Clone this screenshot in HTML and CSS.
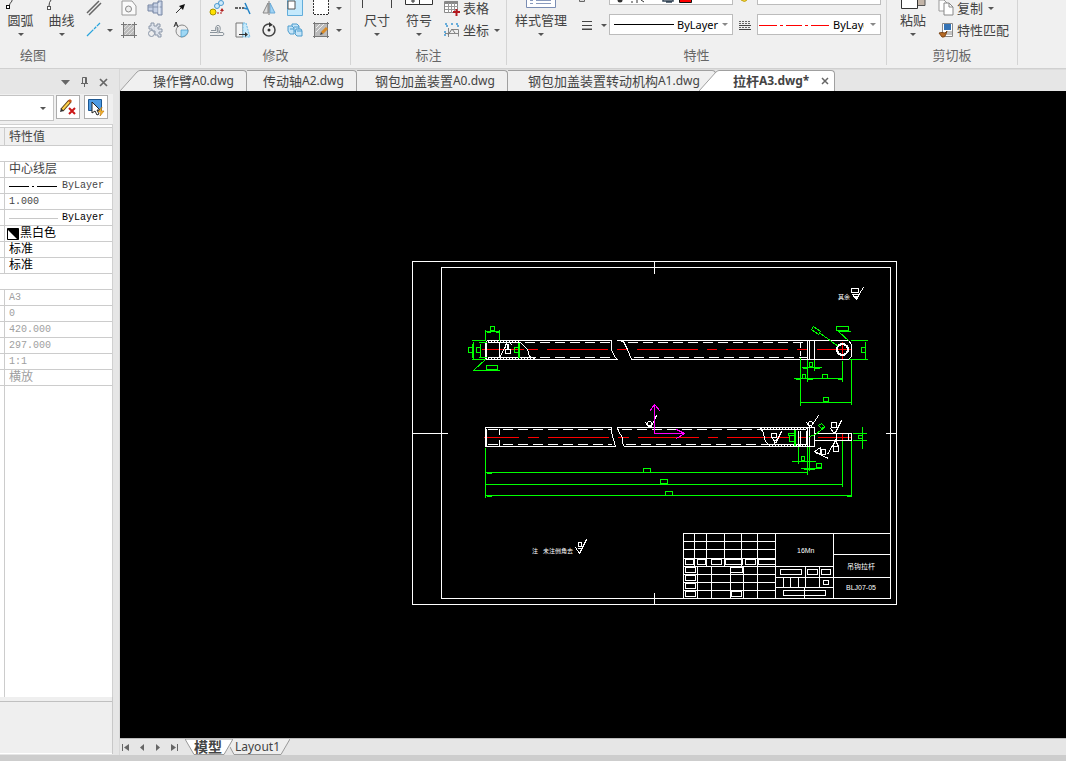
FILE: index.html
```html
<!DOCTYPE html>
<html lang="zh-CN">
<head>
<meta charset="utf-8">
<title>拉杆A3.dwg</title>
<link rel="stylesheet" href="styles.css">
</head>
<body>
<header class="ribbon">
  <section class="group group-draw">
    <div class="tools">
      <button class="big"><svg class="big-icon" width="40" height="11"><path d="M11 0v1q-2 2-3 5" fill="none" stroke="#444"/><rect x="5.500" y="5.500" width="3" height="3" fill="#fff" stroke="#111"/></svg>圆弧<i class="caret"></i></button>
      <button class="big"><svg class="big-icon" width="40" height="11"><path d="M9 0q-2 2-2 6" fill="none" stroke="#444"/><rect x="5.500" y="6.500" width="3" height="3" fill="#fff" stroke="#555"/></svg>曲线<i class="caret"></i></button>
      <div class="pair">
        <button class="tool" aria-label="多线"><svg width="16" height="16"><path d="M1 13 13 1M3 15 15 3" stroke="#666" stroke-width="1.500"/></svg></button>
        <button class="tool" aria-label="构造线"><svg width="16" height="16"><path d="M1 14 14 1" stroke="#28a4dc" stroke-width="1.300" stroke-dasharray="9 1 3 1"/></svg><i class="caret"></i></button>
      </div>
      <div class="pair">
        <button class="tool" aria-label="区域"><svg width="16" height="16"><path d="M1 1h10l4 5v9H1z" fill="#fafafa" stroke="#999"/><circle cx="7.500" cy="9" r="3" fill="#eee" stroke="#888"/></svg></button>
        <button class="tool" aria-label="填充"><svg width="16" height="16"><path d="M2 2h12v12H2z" fill="#bbb"/><path d="M0 2.500h16M2.500 0v16M13.500 0v16M0 13.500h16" stroke="#777"/><path d="M3 6l4-4M3 10l8-8M4 13l9-9M8 13l5-5" stroke="#eee" stroke-width=".7"/></svg></button>
      </div>
      <div class="pair">
        <button class="tool" aria-label="轴"><svg width="16" height="16"><path d="M1 5h5V3h5V1h4v14h-4v-2H6v-2H1z" fill="#c5d0e4" stroke="#7786a3"/><path d="M1 7h14M6 4v8M11 2v12" stroke="#8795af"/><path d="M12 3v11" stroke="#fff"/></svg></button>
        <button class="tool" aria-label="零件"><svg width="16" height="16"><path d="M4 4V1h3v3h3V2h3v3h-2v2h4v3h-3v2h2v3h-3v-2H8V9H5V7H2V4z" fill="#dfe4ec" stroke="#8a96a8"/><circle cx="4.500" cy="11.500" r="3" fill="#eee" stroke="#8a96a8"/></svg></button>
      </div>
      <div class="pair">
        <button class="tool" aria-label="箭头"><svg width="16" height="16"><path d="M3 13 9 7" stroke="#333"/><path d="M12 4 10 10 6 6z" fill="#111"/></svg></button>
        <button class="tool" aria-label="局部放大"><svg width="16" height="16"><circle cx="9" cy="9" r="6" fill="#eee" stroke="#888"/><path d="M8 8h7q0 6-7 7z" fill="#9fd8f5" stroke="#4a9cc9" stroke-width=".7"/><path d="M1 5 3 0l2 5M2 3h2" fill="none" stroke="#333"/></svg></button>
      </div>
    </div>
    <h2 class="group-name">绘图</h2>
  </section>
  <section class="group group-modify">
    <div class="tools">
      <div class="pair">
        <button class="tool" aria-label="复制对象"><svg width="16" height="16"><circle cx="4" cy="12" r="3" fill="#ffe100" stroke="#a59300"/><g fill="#cfeafa" stroke="#4a9ad0"><circle cx="8" cy="6" r="2.500"/><circle cx="12" cy="3" r="2.500"/></g><path d="M8 13h5v-2" fill="none" stroke="#b21f1f" stroke-dasharray="2 1"/><path d="m11 11 2-3 2 3z" fill="#b21f1f"/></svg></button>
        <button class="tool" aria-label="偏移"><svg width="16" height="16"><path d="M1 13.500h13q2-1.500 0-3h-4q2-3 1-6Q9 2 7 4.500q-1 3 0 4H2" fill="none" stroke="#8b949c"/><path d="M1 10.500h7q1-1 0-5h1v6" fill="none" stroke="#8b949c"/></svg></button>
      </div>
      <div class="pair">
        <button class="tool" aria-label="修剪"><svg width="16" height="16"><path d="M0 8h3m1 0h2m1 0h2" stroke="#333" stroke-width="1.500"/><path d="m9 8 3 1M10 3l5 11" stroke="#2584c6" stroke-width="1.500"/></svg></button>
        <button class="tool" aria-label="拉伸"><svg width="16" height="16"><path d="M1 1h7v14H1z" fill="#f5f5f5" stroke="#777"/><path d="M8 1h3l4 14H8z" fill="#c6eafc" stroke="#69b8e4" stroke-dasharray="2 1"/><path d="M4 12.500h6" stroke="#333"/><path d="m10 10 3 2.500-3 2.500z" fill="#333"/></svg></button>
      </div>
      <div class="pair">
        <button class="tool" aria-label="镜像"><svg width="16" height="16"><path d="M7 3v10H2z" fill="#ddd" stroke="#888"/><path d="M9 3v10h5z" fill="#9fd3f5" stroke="#68a8d5"/><path d="M8 1v14" stroke="#777"/></svg></button>
        <button class="tool" aria-label="旋转"><svg width="16" height="16"><circle cx="8" cy="8" r="6" fill="none" stroke="#444" stroke-width="1.500" stroke-dasharray="29 3"/><circle cx="8" cy="8" r="1.500" fill="#333"/><path d="m8 0 4 3-4 2z" fill="#333"/></svg></button>
      </div>
      <div class="pair">
        <button class="tool" aria-label="缩放"><svg width="16" height="16"><path d="M.5 0v15.500h15V0" fill="#c4e9fc" stroke="#62addb"/><path d="M1 1h7v8H1z" fill="#fff" stroke="#555"/></svg></button>
        <button class="tool" aria-label="分解"><svg width="16" height="16"><g fill="#c4e4f8" stroke="#4c9ccd"><path d="M5 2h5l2 2v5H7L5 7z"/><path d="M1 4h4l2 2v6H3L1 9z"/><path d="M9 7h5l1 2v5h-5l-2-2z"/><path d="M3 7h4M10 9h5M7 5h5" fill="none"/></g></svg></button>
      </div>
      <div class="pair">
        <button class="tool" aria-label="选择"><svg width="16" height="16"><path d="M.5 0v14.500h15V0" fill="#fff" stroke="#333" stroke-dasharray="2 1"/></svg><i class="caret"></i></button>
        <button class="tool" aria-label="编辑填充"><svg width="16" height="16"><path d="M2 2h12v12H2z" fill="#bbb"/><path d="M0 1.500h16M1.500 0v16M14.500 0v16M0 14.500h16" stroke="#777"/><path d="M3 6l4-4M3 10l8-8" stroke="#eee"/><path d="m9 11 5-5" stroke="#d98b27" stroke-width="3"/><path d="m7 13 1-3 2 2z" fill="#444"/></svg><i class="caret"></i></button>
      </div>
    </div>
    <h2 class="group-name">修改</h2>
  </section>
  <section class="group group-annotate">
    <div class="tools">
      <button class="big"><svg class="big-icon" width="40" height="11"><path d="M5.500 0v8M34.500 0v8" fill="none" stroke="#444"/></svg>尺寸<i class="caret"></i></button>
      <button class="big"><svg class="big-icon" width="40" height="11"><path d="M6.500-1h27v5.500h-27zM20.500 0v4" fill="#fff" stroke="#333"/><path d="M12 1h4M14 0v3" stroke="#333"/></svg>符号<i class="caret"></i></button>
      <div class="pair">
        <button class="tool labeled"><svg width="16" height="16"><path d="M.5 1.500h13v11H.5z" fill="#fff" stroke="#888"/><path d="M1 1h13v3H1z" fill="#888"/><path d="M1 6.500h13M1 9.500h13M4.500 3v10M7.500 3v10M10.500 3v10" stroke="#999"/><path d="M9 12h7M12.500 9v7" stroke="#b3191f" stroke-width="2"/></svg>表格</button>
        <button class="tool labeled"><svg width="16" height="16"><path d="M4.500 6v9M1 11.500h14M8 7.500h6.500v7" fill="none" stroke="#888"/><path d="m4 13 4-6 3 4" fill="none" stroke="#777"/><path d="M1 2h2v3m4-3h2m3 0h2v3M1 9v5" fill="none" stroke="#3b97d3" stroke-width="1.500" stroke-dasharray="2 1"/></svg>坐标<i class="caret"></i></button>
      </div>
    </div>
    <h2 class="group-name">标注</h2>
  </section>
  <section class="group group-props">
    <div class="tools">
      <button class="big"><svg class="big-icon" width="40" height="11"><path d="M5.500-1h29v8.500h-29z" fill="#fff" stroke="#7a8db3"/><path d="M9 .5h3m3 0h15M9 3.500h3m3 0h15" stroke="#8a9bbd"/></svg>样式管理<i class="caret"></i></button>
      <div class="pair weight">
        <button class="tool" aria-label="图层"><svg width="16" height="16"><path d="M.5 0v1.500h5V0" fill="#ddd" stroke="#666"/></svg></button>
        <button class="tool" aria-label="线宽"><svg width="16" height="16"><path d="M3 4.500h10M3 8.500h10M3 12h10M3 12.500h10" stroke="#444"/></svg><i class="caret"></i></button>
      </div>
      <div class="combos">
        <div class="combo top"><svg width="114" height="5"><circle cx="6" cy="0" r="2.500" fill="#333"/><path d="M17 2h2M23 0v3M27 0l3 2" stroke="#333"/><path d="M49 0v1h10V0M52 2h6" fill="none" stroke="#345" stroke-width="1.500"/><path d="M65.500-1v3.500h12V-1z" fill="#f00" stroke="#111"/></svg></div>
        <div class="combo"><svg width="60" height="19"><path d="M0 9.500h60" stroke="#000"/></svg><select aria-label="线宽"><option>ByLayer</option></select><i class="caret"></i></div>
      </div>
      <div class="pair linetype">
        <span class="tool"><svg width="16" height="16"><path d="M4 0q4 3 6 0" fill="#f7d32b" stroke="#bfa21f"/></svg></span>
        <span class="tool"><svg width="16" height="16"><path d="M2 4.500h12M2 6.500h12M2 10.500h12" stroke="#666" stroke-dasharray="2 1"/><path d="M2 8.500h12M2 12.500h12" stroke="#444"/></svg></span>
      </div>
      <div class="combos">
        <div class="combo top"></div>
        <div class="combo"><svg width="71" height="19"><path d="M0 10.500h18m3 0h3m3 0h16m3 0h3m3 0h18" stroke="#f00"/></svg><select class="clipped" aria-label="线型"><option>ByLayer</option></select><i class="caret"></i></div>
      </div>
    </div>
    <h2 class="group-name">特性</h2>
  </section>
  <section class="group group-clip">
    <div class="tools">
      <button class="big"><svg class="big-icon" width="40" height="11"><path d="M21-1h11v6.500H21z" fill="#c3b5a8" stroke="#555"/><path d="M8.500-1h16v9.500h-16z" fill="#fff" stroke="#333"/></svg>粘贴<i class="caret"></i></button>
      <div class="pair">
        <button class="tool labeled"><svg width="16" height="16"><path d="M1 0h5l3 3v8H1z" fill="#fff" stroke="#999"/><path d="M6 3h5l4 4v8H6z" fill="#fff" stroke="#888"/><path d="M11 3v4h4" fill="none" stroke="#888"/></svg>复制<i class="caret"></i></button>
        <button class="tool labeled"><svg width="16" height="16"><path d="M4.500 1.500h10v13h-10z" fill="#fff" stroke="#888"/><path d="M6 2h7v6H6z" fill="#3473b5"/><path d="M8 10h6M8 12h6" stroke="#888"/><path d="M1 11q3-1 6 0l2-2-1 3q-1 4-4 3z" fill="#b76a24" stroke="#7c4618"/></svg>特性匹配</button>
      </div>
    </div>
    <h2 class="group-name">剪切板</h2>
  </section>
</header>

<main class="work">
  <aside class="panel">
    <div class="panel-title">
      <button aria-label="菜单"><svg width="9" height="10"><path d="M0 3h9L4.500 8z" fill="#666"/></svg></button>
      <button aria-label="固定"><svg width="9" height="10"><path d="M2.500 6V.5h4V6M1 6.500h7M4.500 6v4M5.500 1v5" fill="none" stroke="#666"/></svg></button>
      <button aria-label="关闭"><svg width="9" height="10"><path d="m1 2 7 7M8 2 1 9" stroke="#666" stroke-width="1.700"/></svg></button>
    </div>
    <div class="panel-tools">
      <button class="object-pick" aria-label="选择对象"><i class="caret"></i></button>
      <button class="square" aria-label="取消选择"><svg width="18" height="18"><path d="m3 12 8-9" stroke="#553a14" stroke-width="4"/><path d="m3 12 8-9" stroke="#ffd24a" stroke-width="2"/><path d="m10 4 2-2" stroke="#c8571b" stroke-width="3"/><path d="m1 14 1-4 3 3z" fill="#333"/><path d="m10 10 6 6m0-6-6 6" stroke="#cb1717" stroke-width="2"/></svg></button>
      <button class="square" aria-label="快速选择"><svg width="18" height="18"><path d="M1.500 1.500h13v11h-13z" fill="#4d9be3" stroke="#1c5791"/><path d="M5 4v11l3-2 2 4 2-1-2-4h3z" fill="#fff" stroke="#222"/><path d="m15 9-4 5h3l-1 4 4-5h-3z" fill="#ffc02e" stroke="#c17b10" stroke-width=".7"/></svg></button>
    </div>
    <div class="grid-box">
      <table class="props">
        <thead><tr><th class="stub"></th><th>特性值</th></tr></thead>
        <tbody>
          <tr class="band"><td colspan="2"></td></tr>
          <tr><td class="stub"></td><td class="cjk">中心线层</td></tr>
          <tr><td class="stub"></td><td><span class="line-value"><svg width="49" height="12"><path d="M0 6.500h20m3 0h2m3 0h20" stroke="#000"/></svg>ByLayer</span></td></tr>
          <tr><td class="stub"></td><td>1.000</td></tr>
          <tr class="strong"><td class="stub"></td><td><span class="line-value"><svg width="49" height="12"><path d="M0 6.500h49" stroke="#c8c8c8"/></svg>ByLayer</span></td></tr>
          <tr class="strong"><td class="stub"></td><td class="cjk swatch"><span class="line-value"><svg width="12" height="12"><path d="M.5.500h11v11H.5z" fill="#000" stroke="#000"/><path d="M1 2v9h9z" fill="#fff"/></svg>黑白色</span></td></tr>
          <tr class="strong"><td class="stub"></td><td class="cjk">标准</td></tr>
          <tr class="strong"><td class="stub"></td><td class="cjk">标准</td></tr>
          <tr class="band"><td colspan="2"></td></tr>
          <tr class="off"><td class="stub"></td><td>A3</td></tr>
          <tr class="off"><td class="stub"></td><td>0</td></tr>
          <tr class="off"><td class="stub"></td><td>420.000</td></tr>
          <tr class="off"><td class="stub"></td><td>297.000</td></tr>
          <tr class="off"><td class="stub"></td><td>1:1</td></tr>
          <tr class="off"><td class="stub"></td><td class="cjk">横放</td></tr>
        </tbody>
      </table>
      <div class="rest"></div>
    </div>
    <div class="hint"></div>
  </aside>

  <section class="doc">
    <nav class="tabs">
      <button class="tab first"><svg class="slant" width="20" height="21"><path d="M0 21 17 2q2-1.500 3-1.500V21z" fill="#f0f0f0"/><path d="M0 21 17 2q2-1.500 3-1.500" fill="none" stroke="#a0a0a0"/></svg><span class="face">操作臂<span class="file">A0.dwg</span></span></button>
      <button class="tab"><span class="face">传动轴<span class="file">A2.dwg</span></span></button>
      <button class="tab wide"><span class="face">钢包加盖装置<span class="file">A0.dwg</span></span></button>
      <button class="tab under"><span class="face">钢包加盖装置转动机构<span class="file">A1.dwg</span></span></button>
      <button class="tab active"><svg class="slant" width="20" height="21"><path d="M0 21 17 2q2-1.500 3-1.500V21z" fill="#fff"/><path d="M0 21 17 2q2-1.500 3-1.500" fill="none" stroke="#a0a0a0"/></svg><span class="face">拉杆<span class="file">A3.dwg*</span><svg class="close" width="8" height="8"><path d="m1 1 6 6M7 1 1 7" stroke="#666" stroke-width="1.500"/></svg></span></button>
    </nav>
    <div class="canvas">
      <svg class="drawing" viewBox="120 91 946 647" role="img" aria-label="拉杆图纸">
        <g class="ink" transform="translate(.5 .5)">
          <g class="red">
            <path d="M481 349h42M526 349h11M546 349h61M616 349h11M636 349h61M706 349h10M725 349h62M796 349h11M816 349h35M842 341v18"/>
            <path d="M483 437h35M527 437h11M547 437h61M617 437h11M637 437h61M707 437h10M726 437h62M797 437h10M817 437h34M842 432v8"/>
          </g>
          <g class="white">
            <path d="M412 261h484v343H412zM441 267h449v331H441zM654 261v12M654 592v12M412 433h35M885 433h11"/>
            <path d="M486 340h125v9l3 7 3 3H486M617 340h231l3 4v12l-3 3H631l-4-10-4-8-6-1"/>
            <path d="M524 342h87M524 357h90M627 342h180M633 357h174" stroke-dasharray="10 5"/>
            <path d="M486 340v19M485 341v17M499 341v16M487 342h33M487 357h48M520 342l7 7 2 7 6 2M499 357l6-11 1-4M512 345l-3-3M505 349h5v4h-5zM507 343v5M508 343v5"/>
            <path d="M487 341h33M487 358h48" stroke-dasharray="1 2"/>
            <path d="M800 342v15" stroke-dasharray="5 3"/>
            <path d="M807 340v19M809 340v19M814 340v19"/>
            <circle cx="842" cy="349" r="5.500" stroke-width="2"/>
            <path d="M851 288h7v4h-7zM852 294h7l-3 5zM855 299l8-12M853 296h5"/>
            <path d="M485 427h126v5l4 14H485zM486 428v17M617 427h190M617 427l1 4 4 6v6l2 3h183M807 427v19M809 427v19M814 427v19M807 427h7M807 446h7"/>
            <path d="M487 429h124M487 444h124M621 429h139M625 444h141" stroke-dasharray="10 5"/>
            <path d="M499 428v6M499 439v6M760 428l3 4 1 7 4 6M798 430v15M800 430v15M806 430v14M760 429h45M767 444h38"/>
            <path d="M760 428h46M768 445h38" stroke-dasharray="1 2"/>
            <path d="M771 433h5v4h-5zM772 438l2 3 3-3M774 439v5M775 443l6-12"/>
            <circle cx="649" cy="423" r="2"/><path d="M645 422l3 4h3l5-11"/>
            <circle cx="810" cy="423" r="2"/><path d="M806 422l4 5 8-12"/>
            <path d="M814 433h37v7h-37M836 433v7M848 433v7M831 422h5v5h-5zM830 428l3 4h2l6-12M835 440l-3 6h6l-3-6-8 14M833 446h5v5h-5zM814 451l6-4v7zM821 449h4v5h-4zM815 452l13 6"/>
            <path d="M578 542h3v4h-3zM575 547l4 6 7-14M577 548h4"/>
            <path d="M683 598v-65h207M683 541h92M683 549h92M683 558h92M683 566h150M683 574h92M683 582h92M683 590h92M694 533v33M706 533v33M724 533v33M741 533v33M757 533v65M775 533v65M697 566v32M711 566v32M730 566v32M743 566v32M833 533v65M833 554h57M775 577h115M775 587h58M805 566v21M819 566v21M783 577v10M790 577v10M798 577v10M804 587v11"/>
            <path d="M685 559h8v5h-8zM697 559h8v5h-8zM711 559h10v5h-10zM725 559h17v5h-17zM745 559h10v5h-10zM758 559h17v5h-17zM685 567h10v5h-10zM685 575h10v5h-10zM685 583h10v5h-10zM685 591h10v5h-10zM730 567h12v5h-12zM731 591h10v5h-10zM780 569h21v5h-21zM807 569h10v5h-10zM821 569h9v5h-9zM823 580h5v4h-5zM783 590h42v5h-42z"/>
          </g>
          <g class="green">
            <path d="M471 340h14M471 359h14M478 342h8M478 357h8M473 341v18M472 343v14M480 343v14M468 347h4v5h-4zM476 347h4v5h-4zM518 342v15M519 342v15M514 347h4v5h-4z"/>
            <path d="M485 329v11M499 329v11M485 331h14M486 332h4M495 332h4M490 326h4v4h-4zM485 359l-12 11h26M486 365h11v4h-11z"/>
            <path d="M811 329l2-3 7 5-2 3zM820 333l18 13M836 326h12v4h-12zM837 331h13M838 331l11 10M850 340h17M848 359h19M865 341v18M861 347h4v5h-4z"/>
            <path d="M800 357v48M807 359v22M814 359v11M842 360v21M851 359v45M801 367h20M802 368h5M814 368h5M793 378h49M795 379h5M807 379h5M837 379h5M800 402h51M809 362h3v4h-3zM802 374h3v4h-3zM822 374h5v4h-5zM823 397h5v4h-5z"/>
            <path d="M485 447v50M485 472h322M485 484h357M485 495h366M486 473h5M486 496h5M846 496h5M643 468h7v4h-7zM660 479h7v4h-7zM665 491h7v4h-7z"/>
            <path d="M794 429v16M795 429v16M789 435h5v6h-5zM788 433h6v2h-6zM798 446v17M791 461h24M801 456h3v4h-3zM807 446v28M809 446v24M800 468h21M803 469h11M816 463h5v4h-5zM842 440v46M851 440v56M852 433h14M852 440h14M862 426v22M858 435h4v3h-4zM809 436l6-2 10-8M818 425l3-2 3 3-3 2z"/>
          </g>
          <path class="magenta" d="M654 433v-29M649 411l5-7 6 7M654 433h30M676 429l8 4-8 5"/>
        </g>
        <g class="lettering">
          <text class="tiny" x="838" y="299">其余</text>
          <text class="tiny" x="532" y="553">注</text>
          <text class="tiny" x="543" y="553">未注倒角去</text>
          <text x="797" y="553">16Mn</text>
          <text x="847" y="569">吊钩拉杆</text>
          <text x="846" y="590">BLJ07-05</text>
        </g>
      </svg>
    </div>
    <nav class="sheets">
      <button class="nav" aria-label="第一个"><svg width="8" height="9"><path d="M.5 1v7" stroke="#666"/><path d="M7 1v7L2 4.500z" fill="#666"/></svg></button>
      <button class="nav" aria-label="上一个"><svg width="8" height="9"><path d="M6 1v7L2 4.500z" fill="#666"/></svg></button>
      <button class="nav" aria-label="下一个"><svg width="8" height="9"><path d="M2 1v7l4-3.500z" fill="#666"/></svg></button>
      <button class="nav" aria-label="最后一个"><svg width="8" height="9"><path d="M7.500 1v7" stroke="#666"/><path d="M1 1v7l5-3.500z" fill="#666"/></svg></button>
      <button class="sheet current"><svg viewBox="0 0 48 17" preserveAspectRatio="none"><path d="M0 0 9 15.500h30L48 0z" fill="#fff" stroke="#999"/></svg><span>模型</span></button>
      <button class="sheet"><svg viewBox="0 0 60 17" preserveAspectRatio="none"><path d="M0 8 4 15.500h47L60 0H3z" fill="#eee"/><path d="M0 8 4 15.500h47L60 0" fill="none" stroke="#999"/></svg><span>Layout1</span></button>
    </nav>
  </section>
</main>
<footer class="status"></footer>
</body>
</html>
```
FILE: styles.css
```css
* { box-sizing: border-box; }

body {
  margin: 0;
  height: 100vh;
  display: flex;
  flex-direction: column;
  overflow: hidden;
  background: #e6e6e6;
  color: #444;
  font: 13px/18px "Noto Sans", "Noto Sans CJK SC", sans-serif;
}

button, select {
  margin: 0;
  padding: 0;
  border: 0;
  background: none;
  color: inherit;
  font: inherit;
}

svg { display: block; flex: none; }

.caret {
  flex: none;
  width: 5px;
  border: solid transparent;
  border-width: 3px 3px 0;
  border-top-color: #555;
}

/* Ribbon */
.ribbon {
  flex: none;
  display: flex;
  height: 69px;
  background: #f0f0f0;
  border-bottom: 1px solid #d0d0d0;
}

.group {
  display: flex;
  flex-direction: column;
  flex: none;
  height: 65px;
  border-right: 1px solid #d4d4d4;
}

.group-draw { width: 201px; }
.group-modify { width: 150px; }
.group-annotate { width: 156px; }
.group-props { width: 380px; }
.group-clip { width: 131px; }

.tools { display: flex; height: 46px; }
.group-modify .tools { padding-left: 4px; }
.group-annotate .tools { padding-left: 5px; }
.group-clip .tools { padding-left: 5px; }

.group-name {
  margin: 0;
  font-size: 13px;
  font-weight: 400;
  line-height: 18px;
  text-align: center;
  color: #666;
}
.group-draw .group-name { padding-left: 20px; text-align: left; }

.big {
  width: 42px;
  display: flex;
  flex-direction: column;
  align-items: center;
  white-space: nowrap;
}
.big .caret { margin-top: 4px; }
.group-draw .big { width: 41px; }
.group-props .big { width: 68px; }

.pair { display: flex; flex-direction: column; gap: 6px; width: 26px; }
.pair:has(.caret) { width: 36px; }

.tool {
  display: flex;
  align-items: center;
  height: 16px;
  padding-left: 4px;
  gap: 7px;
  white-space: nowrap;
}
.tool.labeled { gap: 3px; }
.labeled .caret { margin-left: 2px; }
.group-draw .pair:has(.caret) { width: 35px; }
.group-draw .tool { gap: 5px; }
.pair.weight { width: 34px; gap: 1px; }
.weight .tool { gap: 6px; }
.pair.linetype { width: 24px; gap: 1px; }
.group-clip .pair { width: auto; }

.combos { display: flex; flex-direction: column; gap: 9px; width: 124px; }
.combo {
  display: flex;
  align-items: center;
  height: 21px;
  padding: 0 4px;
  background: #fff;
  border: 1px solid #bcbcbc;
}
.combo.top { height: 5px; border-top: 0; }
.combo select {
  appearance: none;
  flex: 1;
  min-width: 0;
  padding-left: 3px;
  font-size: 11px;
  line-height: 18px;
  color: #000;
}
.combo select.clipped { flex: none; width: 34px; overflow: hidden; }
.combo .caret { margin-left: auto; border-top-color: #888; }
.linetype + .combos .combo { padding-left: 1px; }

/* Workspace */
.work { flex: 1; min-height: 0; display: flex; }

.panel {
  flex: none;
  display: flex;
  flex-direction: column;
  width: 120px;
  padding-right: 6px;
  border-right: 1px solid #d8d8d8;
}

.panel-title {
  display: flex;
  justify-content: flex-end;
  align-items: center;
  gap: 10px;
  height: 25px;
  padding-right: 5px;
}

.panel-tools {
  display: flex;
  gap: 4px;
  height: 30px;
  padding-top: 1px;
  background: #f0f0f0;
}
.object-pick {
  display: flex;
  align-items: center;
  justify-content: flex-end;
  width: 54px;
  height: 26px;
  margin-right: -2px;
  padding-right: 7px;
  background: #fff;
  border: 1px solid #c4c4c4;
  border-left: 0;
}
.square {
  display: flex;
  align-items: center;
  justify-content: center;
  width: 24px;
  height: 24px;
  background: #fff;
  border: 1px solid #adadad;
}

.grid-box {
  flex: 1;
  min-height: 0;
  display: flex;
  flex-direction: column;
  padding-top: 2px;
  background: #fff;
  border-top: 1px solid #d0d0d0;
  border-right: 1px solid #d0d0d0;
}

.props {
  width: 100%;
  border-collapse: separate;
  border-spacing: 0;
}
.props th, .props td {
  height: 16px;
  padding: 1px 0 0 4px;
  border-bottom: 1px solid #ccc;
  font: 10px/14px "Liberation Mono", "Noto Sans CJK SC", monospace;
  text-align: left;
  white-space: nowrap;
}
.props th {
  height: 19px;
  padding-top: 2px;
  background: #f0f0f0;
  border-top: 1px solid #ccc;
  font-size: 12px;
}
.props .cjk { font-size: 12px; }
.props .stub { width: 5px; padding: 0; border-right: 1px solid #ccc; }
.props .strong { color: #000; }
.props .off { color: #a0a0a0; }
.line-value { display: flex; align-items: center; gap: 4px; height: 14px; }
.props .swatch { padding-left: 2px; }
.swatch .line-value { gap: 1px; }

.rest { flex: 1; margin-left: 4px; border-left: 1px solid #ccc; }
.hint {
  height: 57px;
  margin-bottom: 1px;
  background: #efefef;
  border: solid #c8c8c8;
  border-width: 0 1px 0 0;
  box-shadow: inset 0 -1px #fff;
}
.hint::before {
  content: "";
  display: block;
  height: 4px;
  border-bottom: 1px solid #c0c0c0;
}

/* Document */
.doc { flex: 1; min-width: 0; display: flex; flex-direction: column; }

.tabs {
  display: flex;
  align-items: flex-end;
  height: 22px;
  border-top: 1px solid #dcdcdc;
}
.tab { display: flex; height: 21px; }
.face {
  display: flex;
  align-items: center;
  height: 21px;
  padding: 0 12px 0 16px;
  background: #f0f0f0;
  border: solid #a0a0a0;
  border-width: 1px 1px 0 0;
  border-radius: 0 4px 0 0;
  white-space: nowrap;
}
.file { font-size: 12px; }
.first .face { padding-left: 13px; }
.wide .face { padding: 0 12px 0 18px; }
.under .face { padding: 0 15px 0 20px; }
.active { position: relative; margin-left: -17px; }
.active .face {
  padding: 0 5px 0 14px;
  background: #fff;
  font-weight: 700;
}
.close { margin-left: 12px; }

.canvas { flex: 1; min-height: 0; background: #000; }
.drawing { width: 100%; height: 100%; }
.ink { fill: none; stroke-width: 1; shape-rendering: crispEdges; }
.white { stroke: #fff; }
.red { stroke: #f00; }
.green { stroke: #0f0; }
.magenta { stroke: #f0f; }
.lettering { fill: #fff; font: 7px "Liberation Sans", "Noto Sans CJK SC", sans-serif; }
.lettering .tiny { font-size: 6px; }

.sheets {
  display: flex;
  align-items: center;
  height: 17px;
  border-top: 1px solid #bbb;
}
.nav { display: flex; width: 16px; padding-left: 2px; }
.sheet {
  position: relative;
  display: flex;
  align-items: center;
  justify-content: center;
  width: 60px;
  height: 17px;
  margin-left: -3px;
  padding-right: 5px;
  font-size: 12px;
  line-height: 16px;
}
.sheet svg { position: absolute; inset: 0; width: 100%; height: 100%; }
.sheet span { position: relative; }
.sheet.current {
  z-index: 1;
  width: 48px;
  margin-left: 1px;
  padding-right: 2px;
  font-size: 14px;
  font-weight: 700;
}

.status { flex: none; height: 6px; background: #cdcdcd; }
```
